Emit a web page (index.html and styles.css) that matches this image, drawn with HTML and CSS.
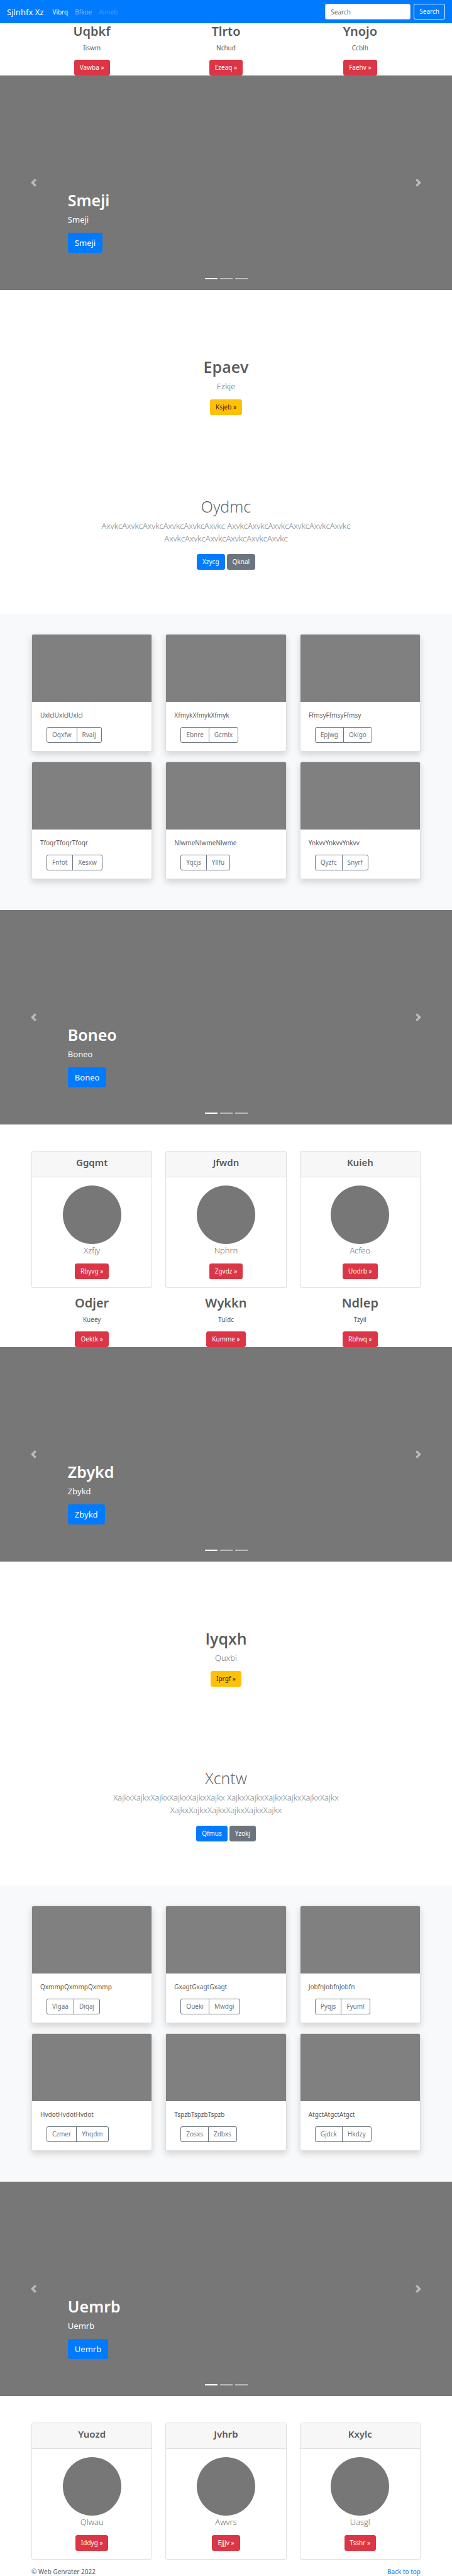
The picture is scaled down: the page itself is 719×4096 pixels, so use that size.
FILE: index.html
```
<!DOCTYPE html>
<html lang="en">
<head>
<meta charset="utf-8">
<meta name="viewport" content="width=device-width, initial-scale=1">
<title>Sjlnhfx Xz</title>
<link rel="stylesheet" href="styles.css">
</head>
<body id="top">
<header class="navbar">
  <a class="brand" href="#top">Sjlnhfx Xz</a>
  <nav class="nav-links">
    <a class="nav-link active" href="#">Vibrq</a>
    <a class="nav-link" href="#">Bfkoe</a>
    <a class="nav-link disabled" href="#">Aimeb</a>
  </nav>
  <form class="search">
    <input class="search-input" type="search" placeholder="Search" aria-label="Search">
    <button class="btn btn-outline-light" type="button">Search</button>
  </form>
</header>

<main>
  <section class="container columns marketing">
    <div class="feature"><h2 class="feature-title">Uqbkf</h2><p class="text">Iiswm</p><a class="btn btn-danger" href="#">Vawba »</a></div>
    <div class="feature"><h2 class="feature-title">Tlrto</h2><p class="text">Nchud</p><a class="btn btn-danger" href="#">Ezeaq »</a></div>
    <div class="feature"><h2 class="feature-title">Ynojo</h2><p class="text">Ccblh</p><a class="btn btn-danger" href="#">Faehv »</a></div>
  </section>

  <section class="carousel">
    <button class="carousel-control" type="button" aria-label="Previous"><svg class="chevron" viewBox="0 0 8 8"><path d="M5.25 0l-4 4 4 4 1.5-1.5-2.5-2.5 2.5-2.5-1.5-1.5z"/></svg></button>
    <div class="carousel-body">
      <div class="caption"><h1 class="caption-title">Smeji</h1><p class="caption-text">Smeji</p><a class="btn btn-primary btn-lg" href="#">Smeji</a></div>
      <div class="indicators"><span class="indicator current"></span><span class="indicator"></span><span class="indicator"></span></div>
    </div>
    <button class="carousel-control" type="button" aria-label="Next"><svg class="chevron" viewBox="0 0 8 8"><path d="M2.75 0l-1.5 1.5 2.5 2.5-2.5 2.5 1.5 1.5 4-4-4-4z"/></svg></button>
  </section>

  <section class="intro">
    <h1 class="intro-title">Epaev</h1>
    <p class="lead">Ezkje</p>
    <a class="btn btn-warning" href="#">Ksjeb »</a>
  </section>
  <section class="pitch">
    <h1 class="pitch-title">Oydmc</h1>
    <p class="lead muted">AxvkcAxvkcAxvkcAxvkcAxvkcAxvkc AxvkcAxvkcAxvkcAxvkcAxvkcAxvkc AxvkcAxvkcAxvkcAxvkcAxvkcAxvkc</p>
    <div class="actions"><a class="btn btn-primary" href="#">Xzycg</a><a class="btn btn-secondary" href="#">Qknal</a></div>
  </section>

  <section class="album">
    <div class="container columns album-grid">
      <article class="card photo-card"><div class="photo"></div><div class="card-body"><p class="text">UxlclUxlclUxlcl</p><div class="btn-group"><button class="btn" type="button">Oqxfw</button><button class="btn" type="button">Rvaij</button></div></div></article>
      <article class="card photo-card"><div class="photo"></div><div class="card-body"><p class="text">XfmykXfmykXfmyk</p><div class="btn-group"><button class="btn" type="button">Ebnre</button><button class="btn" type="button">Gcmlx</button></div></div></article>
      <article class="card photo-card"><div class="photo"></div><div class="card-body"><p class="text">FfmsyFfmsyFfmsy</p><div class="btn-group"><button class="btn" type="button">Epjwg</button><button class="btn" type="button">Okigo</button></div></div></article>
      <article class="card photo-card"><div class="photo"></div><div class="card-body"><p class="text">TfoqrTfoqrTfoqr</p><div class="btn-group"><button class="btn" type="button">Fnfot</button><button class="btn" type="button">Xesxw</button></div></div></article>
      <article class="card photo-card"><div class="photo"></div><div class="card-body"><p class="text">NlwmeNlwmeNlwme</p><div class="btn-group"><button class="btn" type="button">Yqcjs</button><button class="btn" type="button">Yllfu</button></div></div></article>
      <article class="card photo-card"><div class="photo"></div><div class="card-body"><p class="text">YnkvvYnkvvYnkvv</p><div class="btn-group"><button class="btn" type="button">Qyzfc</button><button class="btn" type="button">Snyrf</button></div></div></article>
    </div>
  </section>

  <section class="carousel">
    <button class="carousel-control" type="button" aria-label="Previous"><svg class="chevron" viewBox="0 0 8 8"><path d="M5.25 0l-4 4 4 4 1.5-1.5-2.5-2.5 2.5-2.5-1.5-1.5z"/></svg></button>
    <div class="carousel-body">
      <div class="caption"><h1 class="caption-title">Boneo</h1><p class="caption-text">Boneo</p><a class="btn btn-primary btn-lg" href="#">Boneo</a></div>
      <div class="indicators"><span class="indicator current"></span><span class="indicator"></span><span class="indicator"></span></div>
    </div>
    <button class="carousel-control" type="button" aria-label="Next"><svg class="chevron" viewBox="0 0 8 8"><path d="M2.75 0l-1.5 1.5 2.5 2.5-2.5 2.5 1.5 1.5 4-4-4-4z"/></svg></button>
  </section>

  <section class="container columns team">
    <article class="card"><div class="card-header"><h4 class="card-title">Ggqmt</h4></div><div class="card-body profile"><div class="avatar"></div><p class="lead">Xzfjy</p><a class="btn btn-danger" href="#">Rbyvg »</a></div></article>
    <article class="card"><div class="card-header"><h4 class="card-title">Jfwdn</h4></div><div class="card-body profile"><div class="avatar"></div><p class="lead">Nphrn</p><a class="btn btn-danger" href="#">Zgvdz »</a></div></article>
    <article class="card"><div class="card-header"><h4 class="card-title">Kuieh</h4></div><div class="card-body profile"><div class="avatar"></div><p class="lead">Acfeo</p><a class="btn btn-danger" href="#">Uodrb »</a></div></article>
  </section>

  <section class="container columns marketing">
    <div class="feature"><h2 class="feature-title">Odjer</h2><p class="text">Kueey</p><a class="btn btn-danger" href="#">Oektk »</a></div>
    <div class="feature"><h2 class="feature-title">Wykkn</h2><p class="text">Tuldc</p><a class="btn btn-danger" href="#">Kumme »</a></div>
    <div class="feature"><h2 class="feature-title">Ndlep</h2><p class="text">Tzyil</p><a class="btn btn-danger" href="#">Rbhvq »</a></div>
  </section>

  <section class="carousel">
    <button class="carousel-control" type="button" aria-label="Previous"><svg class="chevron" viewBox="0 0 8 8"><path d="M5.25 0l-4 4 4 4 1.5-1.5-2.5-2.5 2.5-2.5-1.5-1.5z"/></svg></button>
    <div class="carousel-body">
      <div class="caption"><h1 class="caption-title">Zbykd</h1><p class="caption-text">Zbykd</p><a class="btn btn-primary btn-lg" href="#">Zbykd</a></div>
      <div class="indicators"><span class="indicator current"></span><span class="indicator"></span><span class="indicator"></span></div>
    </div>
    <button class="carousel-control" type="button" aria-label="Next"><svg class="chevron" viewBox="0 0 8 8"><path d="M2.75 0l-1.5 1.5 2.5 2.5-2.5 2.5 1.5 1.5 4-4-4-4z"/></svg></button>
  </section>

  <section class="intro">
    <h1 class="intro-title">Iyqxh</h1>
    <p class="lead">Quxbi</p>
    <a class="btn btn-warning" href="#">Iprgf »</a>
  </section>
  <section class="pitch">
    <h1 class="pitch-title">Xcntw</h1>
    <p class="lead muted">XajkxXajkxXajkxXajkxXajkxXajkx XajkxXajkxXajkxXajkxXajkxXajkx XajkxXajkxXajkxXajkxXajkxXajkx</p>
    <div class="actions"><a class="btn btn-primary" href="#">Qfmus</a><a class="btn btn-secondary" href="#">Yzokj</a></div>
  </section>

  <section class="album">
    <div class="container columns album-grid">
      <article class="card photo-card"><div class="photo"></div><div class="card-body"><p class="text">QxmmpQxmmpQxmmp</p><div class="btn-group"><button class="btn" type="button">Vlgaa</button><button class="btn" type="button">Diqaj</button></div></div></article>
      <article class="card photo-card"><div class="photo"></div><div class="card-body"><p class="text">GxagtGxagtGxagt</p><div class="btn-group"><button class="btn" type="button">Oueki</button><button class="btn" type="button">Mwdgi</button></div></div></article>
      <article class="card photo-card"><div class="photo"></div><div class="card-body"><p class="text">JobfnJobfnJobfn</p><div class="btn-group"><button class="btn" type="button">Pyqjs</button><button class="btn" type="button">Fyuml</button></div></div></article>
      <article class="card photo-card"><div class="photo"></div><div class="card-body"><p class="text">HvdotHvdotHvdot</p><div class="btn-group"><button class="btn" type="button">Czmer</button><button class="btn" type="button">Yhqdm</button></div></div></article>
      <article class="card photo-card"><div class="photo"></div><div class="card-body"><p class="text">TspzbTspzbTspzb</p><div class="btn-group"><button class="btn" type="button">Zosxs</button><button class="btn" type="button">Zdbxs</button></div></div></article>
      <article class="card photo-card"><div class="photo"></div><div class="card-body"><p class="text">AtgctAtgctAtgct</p><div class="btn-group"><button class="btn" type="button">Gjdck</button><button class="btn" type="button">Hkdzy</button></div></div></article>
    </div>
  </section>

  <section class="carousel">
    <button class="carousel-control" type="button" aria-label="Previous"><svg class="chevron" viewBox="0 0 8 8"><path d="M5.25 0l-4 4 4 4 1.5-1.5-2.5-2.5 2.5-2.5-1.5-1.5z"/></svg></button>
    <div class="carousel-body">
      <div class="caption"><h1 class="caption-title">Uemrb</h1><p class="caption-text">Uemrb</p><a class="btn btn-primary btn-lg" href="#">Uemrb</a></div>
      <div class="indicators"><span class="indicator current"></span><span class="indicator"></span><span class="indicator"></span></div>
    </div>
    <button class="carousel-control" type="button" aria-label="Next"><svg class="chevron" viewBox="0 0 8 8"><path d="M2.75 0l-1.5 1.5 2.5 2.5-2.5 2.5 1.5 1.5 4-4-4-4z"/></svg></button>
  </section>

  <section class="container columns team">
    <article class="card"><div class="card-header"><h4 class="card-title">Yuozd</h4></div><div class="card-body profile"><div class="avatar"></div><p class="lead">Qlwau</p><a class="btn btn-danger" href="#">Iddyg »</a></div></article>
    <article class="card"><div class="card-header"><h4 class="card-title">Jvhrb</h4></div><div class="card-body profile"><div class="avatar"></div><p class="lead">Awvrs</p><a class="btn btn-danger" href="#">Ejjjv »</a></div></article>
    <article class="card"><div class="card-header"><h4 class="card-title">Kxylc</h4></div><div class="card-body profile"><div class="avatar"></div><p class="lead">Uasgl</p><a class="btn btn-danger" href="#">Tsshr »</a></div></article>
  </section>
</main>

<footer class="container footer">
  <span>© Web Genrater 2022</span>
  <a class="footer-link" href="#top">Back to top</a>
</footer>
</body>
</html>
```
FILE: styles.css
```
* {
  box-sizing: border-box;
}

body {
  margin: 0;
  background: #fff;
  color: #5a5a5a;
  font: 400 10px/16px "Noto Sans", sans-serif;
}

h1, h2, h4, p {
  margin: 0;
}

a {
  text-decoration: none;
}

.container {
  width: 100%;
  max-width: 639px;
  margin: 0 auto;
  padding: 0 10px;
}

.columns {
  display: grid;
  grid-template-columns: repeat(3, minmax(0, 1fr));
  column-gap: 21px;
}

/* Buttons */
.btn {
  display: inline-block;
  border: 1px solid transparent;
  border-radius: 3px;
  padding: 0 8px;
  background: transparent;
  color: #fff;
  font: inherit;
  line-height: 23px;
  text-align: center;
}

.btn-lg {
  padding: 0 10px;
  font-size: 13px;
  line-height: 30px;
}

.btn-primary { background: #007bff; border-color: #007bff; }
.btn-secondary { background: #6c757d; border-color: #6c757d; }
.btn-danger { background: #dc3545; border-color: #dc3545; }
.btn-warning { background: #ffc107; border-color: #ffc107; color: #212529; }
.btn-outline-light { border-color: #f8f9fa; color: #f8f9fa; }

/* Top bar */
.navbar {
  display: flex;
  align-items: center;
  padding: 6px 11px;
  background: #007bff;
}

.brand {
  margin-right: 14px;
  color: #fff;
  font-size: 13px;
}

.nav-links {
  display: flex;
  flex: 1;
  gap: 11px;
}

.nav-link { color: rgba(255, 255, 255, .5); }
.nav-link.active { color: #fff; }
.nav-link.disabled { color: rgba(255, 255, 255, .25); }

.search {
  display: flex;
  gap: 5px;
}

.search-input {
  width: 136px;
  height: 25px;
  border: 1px solid #ced4da;
  border-radius: 3px;
  padding: 0 8px;
  background: #fff;
  color: #495057;
  font: inherit;
}

.search-input::placeholder {
  color: #6c757d;
  opacity: 1;
}

/* Feature columns */
.feature {
  display: flex;
  flex-direction: column;
  align-items: center;
}

.feature-title {
  margin-bottom: 5px;
  font-size: 20px;
  font-weight: 600;
  line-height: 26px;
}

.text {
  margin-bottom: 11px;
}

/* Carousel */
.carousel {
  display: grid;
  grid-template-columns: 15% 1fr 15%;
  min-height: 341px;
  background: #777;
}

.carousel-control {
  display: flex;
  align-items: center;
  justify-content: center;
  border: 0;
  padding: 0;
  background: transparent;
  opacity: .5;
}

.chevron {
  width: 13px;
  height: 13px;
  fill: #fff;
}

.carousel-body {
  display: flex;
  flex-direction: column;
  justify-content: flex-end;
  padding-bottom: 17px;
}

.caption {
  margin-bottom: 40px;
  color: #fff;
}

.caption .btn {
  display: block;
  width: fit-content;
}

.caption-title {
  margin-bottom: 5px;
  font-size: 25px;
  font-weight: 600;
  line-height: 32px;
}

.caption-text {
  margin-bottom: 11px;
  font-size: 13px;
  line-height: 20px;
}

.indicators {
  display: flex;
  justify-content: center;
  gap: 4px;
}

.indicator {
  width: 20px;
  height: 2px;
  background: #fff;
  opacity: .5;
}

.indicator.current {
  opacity: 1;
}

/* Centered text sections */
.intro, .pitch {
  display: flex;
  flex-direction: column;
  align-items: center;
  text-align: center;
}

.intro {
  padding: 106px 20px 129px;
}

.pitch {
  padding: 0 20px 70px;
}

.intro-title, .pitch-title {
  margin-bottom: 5px;
  font-family: "Open Sans", "Noto Sans", sans-serif;
  font-size: 25px;
  font-weight: 600;
  line-height: 32px;
}

.pitch-title {
  font-weight: 300;
}

.lead {
  margin-bottom: 11px;
  font-family: "Open Sans", "Noto Sans", sans-serif;
  font-size: 13px;
  font-weight: 300;
  line-height: 20px;
}

.pitch .lead {
  max-width: 420px;
  margin-bottom: 15px;
}

.muted {
  color: #6c757d;
}

.actions {
  display: flex;
  gap: 3px;
}

/* Cards */
.album {
  padding: 32px 0 49px;
  background: #f8f9fa;
}

.album-grid {
  row-gap: 16px;
}

.card {
  border: 1px solid #dfdfdf;
  border-radius: 3px;
  background: #fff;
  overflow: hidden;
}

.photo-card {
  box-shadow: 0 5px 11px rgba(0, 0, 0, .15);
}

.photo {
  height: 107px;
  background: gray;
}

.card-body {
  padding: 13px;
}

.btn-group {
  display: flex;
  padding-left: 10px;
}

.btn-group .btn {
  border-color: #6c757d;
  color: #6c757d;
}

.btn-group .btn:first-child {
  border-radius: 3px 0 0 3px;
}

.btn-group .btn:last-child {
  margin-left: -1px;
  border-radius: 0 3px 3px 0;
}

.team {
  padding-top: 42px;
  padding-bottom: 11px;
}

.card-header {
  border-bottom: 1px solid #dfdfdf;
  padding: 8px 13px 13px;
  background: #f7f7f7;
  text-align: center;
}

.card-title {
  font-size: 15px;
  font-weight: 600;
  line-height: 19px;
}

.profile {
  display: flex;
  flex-direction: column;
  align-items: center;
}

.avatar {
  width: 93px;
  height: 93px;
  border-radius: 50%;
  background: #777;
}

/* Footer */
.footer {
  display: flex;
  justify-content: space-between;
}

.footer-link {
  color: #007bff;
}
```
